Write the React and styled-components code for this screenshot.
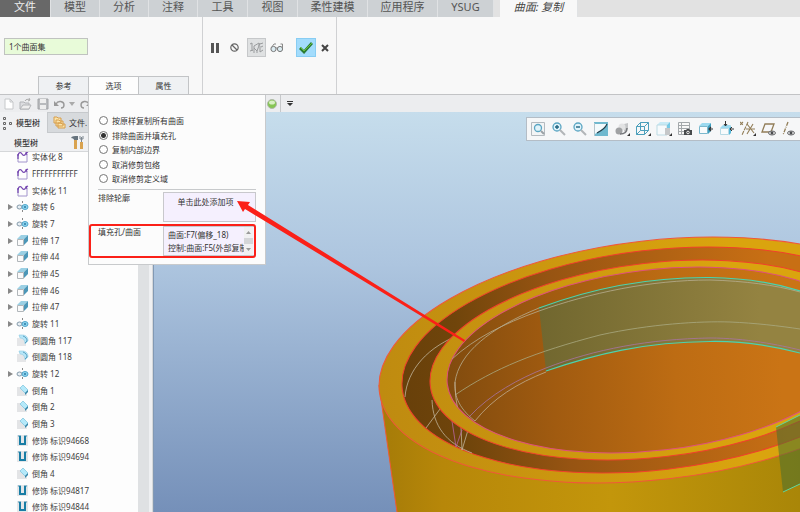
import React, { useState } from 'react'
import styled, { createGlobalStyle } from 'styled-components'

/* Global */
const GlobalStyle = createGlobalStyle`
  * {
    box-sizing: border-box;
  }
  body {
    margin: 0;
    background: #ecedef;
  }
  body, button, input {
    font-family: 'Noto Sans', 'Noto Sans CJK SC', sans-serif;
    font-size: 8px;
    color: #333;
  }
  button {
    border: 0;
    padding: 0;
    background: none;
  }
  ul {
    list-style: none;
    margin: 0;
    padding: 0;
  }
  svg {
    display: block;
    flex: none;
  }
`

/* Styled */
const StyledApp = styled.div`
  display: flex;
  flex-direction: column;
  height: 100vh;
  overflow: hidden;
`

const RibbonTabs = styled.nav`
  display: flex;
  flex: none;
  height: 17px;
  background: #e2e2e2;
`

const RibbonTab = styled.button`
  flex: none;
  width: ${(props) => props.$width}px;
  padding-bottom: 3px;
  font-size: 11px;
  line-height: 14px;
  white-space: nowrap;
  color: #555;
  background: #cdd1d4;
  border-right: 1px solid #e0e2e4;
  &.is-file {
    color: #eee;
    background: #686868;
  }
  &.is-active {
    margin-left: 6px;
    font-style: italic;
    color: #444;
    background: #f8f8f8;
  }
`

const Dashboard = styled.section`
  display: flex;
  flex: none;
  height: 78px;
  background: #f8f8f8;
  border-bottom: 1px solid #c2c3c5;
`

const SetupPane = styled.div`
  display: flex;
  flex-direction: column;
  justify-content: space-between;
  width: 203px;
  padding: 21px 0 0 4px;
  border-right: 1px solid #d0d1d3;
`

const CollectorInput = styled.input`
  width: 84px;
  height: 17px;
  padding: 0 4px;
  background: #e8fbd9;
  border: 1px solid #c0c3c0;
`

const PanelTabs = styled.div`
  display: flex;
  padding-left: 34px;
`

const PanelTabItem = styled.div`
  position: relative;
  & + & {
    margin-left: -1px;
  }
`

const PanelTab = styled.button`
  display: block;
  width: 51px;
  height: 18px;
  background: ${(props) => (props.$active ? '#fdfdfd' : '#eff1f3')};
  border: 1px solid #c2c4c6;
  border-bottom: 0;
`

const ControlPane = styled.div`
  display: flex;
  align-items: flex-start;
  width: 134px;
  padding: 21px 0 0 5px;
  border-right: 1px solid #d0d1d3;
`

const ControlButton = styled.button`
  display: flex;
  justify-content: center;
  align-items: center;
  width: ${(props) => props.$width || 20}px;
  height: 19px;
  border: 1px solid transparent;
  &.is-pressed {
    background: #dfe1e2;
    border-color: #c6c8ca;
  }
  &.is-accept {
    margin-left: 8px;
    background: #a3dcfc;
    border-color: #88cdf3;
  }
`

const QuickBar = styled.div`
  display: flex;
  flex: none;
  height: 17px;
  background: #ecedef;
`

const QuickGroup = styled.div`
  display: flex;
  align-items: center;
  flex: 1;
  &.is-left {
    flex: none;
    width: 266px;
  }
  & > .split {
    align-self: stretch;
    margin: 0 3px;
    border-left: 1px solid #c6c8ca;
  }
`

const QuickButton = styled.button`
  display: flex;
  flex: none;
  justify-content: center;
  width: ${(props) => props.$width || 17}px;
`

const Workspace = styled.main`
  display: flex;
  flex: 1;
  min-height: 0;
`

const Navigator = styled.aside`
  display: flex;
  flex: none;
  width: 154px;
  border-right: 1px solid #8299b4;
`

const NavBody = styled.div`
  display: flex;
  flex-direction: column;
  flex: 1;
  min-width: 0;
  background: #fdfdfd;
`

const ScrollTrack = styled.div`
  width: 11px;
  background: #dfe1e3;
`

const Splitter = styled.div`
  width: 4px;
  background: #eff0f2;
  border-right: 1px solid #d5d7d9;
`

const NavTabs = styled.div`
  display: flex;
  flex: none;
  height: 21px;
  background: #d7dadd;
`

const NavTab = styled.button`
  display: flex;
  align-items: center;
  gap: 3px;
  height: 21px;
  padding: 0 7px 0 1px;
  white-space: nowrap;
  background: #f0f1f3;
  font-weight: 500;
  &.is-idle {
    padding: 0 5px;
    font-weight: 400;
    background: #d7dadd;
    border: 1px solid #c6c9cc;
  }
`

const NavHeader = styled.div`
  display: flex;
  align-items: center;
  flex: none;
  gap: 32px;
  height: 19px;
  padding-left: 14px;
  font-weight: 500;
  background: #f0f1f3;
  border-bottom: 1px solid #d5d7d9;
`

const TreeViewport = styled.div`
  flex: 1;
  min-height: 0;
  overflow: hidden;
`

const TreeList = styled.ul`
  margin-top: -4px;
`

const TreeRow = styled.li`
  display: flex;
  align-items: center;
  height: 17px;
  padding-left: 7px;
  white-space: nowrap;
  color: #3c3c3c;
  &:nth-child(3n) {
    height: 16px;
  }
  .arrow {
    width: 9px;
  }
  .label {
    padding-left: 3px;
  }
`

const Viewport = styled.section`
  position: relative;
  flex: 1;
  min-width: 0;
  background: linear-gradient(#c6ddec, #adc5df 38%, #7590b9);
`

const ViewToolbar = styled.div`
  position: absolute;
  top: 5px;
  right: 0;
  display: flex;
  height: 24px;
  background: #f6f7f8;
  border: 1px solid #b4bdc6;
  border-right: 0;
`

const ViewButton = styled.button`
  display: flex;
  justify-content: center;
  align-items: center;
  width: 21px;
`

const OptionsPanel = styled.div`
  position: absolute;
  z-index: 10;
  top: 19px;
  left: 0;
  width: 178px;
  padding: 18px 9px 8px;
  background: #fcfcfc;
  border: 1px solid #c8cacc;
  border-top: 0;
`

const RadioGroup = styled.fieldset`
  margin: 0;
  padding: 0 0 3px;
  border: 0;
  border-bottom: 1px solid #c8cacc;
`

const RadioLabel = styled.label`
  display: flex;
  align-items: center;
  gap: 4px;
  height: 15px;
  &:nth-child(even) {
    height: 14px;
  }
  input {
    appearance: none;
    width: 9px;
    height: 9px;
    margin: 0 0 0 1px;
    background: #fff;
    border: 1px solid #777;
    border-radius: 50%;
  }
  input:checked {
    background: radial-gradient(#333 0 2px, #fff 3px);
  }
`

const Field = styled.div`
  display: flex;
  justify-content: space-between;
  margin-top: ${(props) => props.$gap}px;
  line-height: 12px;
`

const DropBox = styled.button`
  width: 93px;
  height: 30px;
  padding: 0 8px 12px 0;
  background: #f5f0fe;
  border: 1px solid #c8c8cc;
`

const ListBox = styled.div`
  display: flex;
  width: 93px;
  height: 30px;
  padding-right: 2px;
  background: #f5f0fe;
  border: 1px solid #c8c8cc;
  ul {
    flex: 1;
    min-width: 0;
    padding: 1px 0 0 4px;
    overflow: hidden;
    white-space: nowrap;
    line-height: 13px;
  }
`

const ListScroll = styled.div`
  display: flex;
  flex-direction: column;
  justify-content: space-between;
  width: 9px;
  background: #d4d5d8;
  button {
    display: flex;
    justify-content: center;
    align-items: center;
    height: 11px;
    background: #f0f0f2;
  }
`

const Callout = styled.div`
  position: absolute;
  left: 0;
  right: 9px;
  bottom: 6px;
  height: 34px;
  border: 2px solid #fb2018;
  border-radius: 3px;
  pointer-events: none;
`

const PointerArrow = styled.svg`
  position: absolute;
  top: 0;
  left: 0;
  pointer-events: none;
`

/* Icons */
const Icon = ({ w = 16, h = w, children }) => (
  <svg width={w} height={h} viewBox={`0 0 ${w} ${h}`} fill='none' aria-hidden='true'>
    {children}
  </svg>
)

const Caret = ({ color = '#555' }) => (
  <Icon w={6} h={4}>
    <path d='M0 0h6L3 4z' fill={color} />
  </Icon>
)

const TREE_ICONS = {
  quilt: (
    <Icon w={13}>
      <path d='M2 4v8h9V5' stroke='#a294cc' />
      <path d='M2 9V5c1-3 3-3 4-1s3 2 4-1l2-1M1 5h2M10 2l1 3' stroke='#7446b0' strokeWidth='1.200' />
    </Icon>
  ),
  revolve: (
    <Icon w={13}>
      <path d='M6.500 1v2M6.500 5v2M6.500 10v2' stroke='#888' />
      <ellipse cx='3.500' cy='7' rx='2.500' ry='2' stroke='#8298a8' fill='#e8eff4' />
      <ellipse cx='9' cy='7' rx='3' ry='2.500' stroke='#54a9cd' fill='#8fd3ee' />
      <circle cx='9' cy='7' r='1' fill='#287da5' />
    </Icon>
  ),
  extrude: (
    <Icon w={13}>
      <path d='M1 5l4-4h7L8 5z' fill='#9bd0e4' />
      <path d='M8 5l4-4v6L8 11z' fill='#4c97b8' />
      <path d='M1.500 5.500h6v6h-6z' fill='#fafafa' stroke='#b1b6ba' />
    </Icon>
  ),
  round: (
    <Icon w={13}>
      <path d='M1 4h6l3 3v5H1z' fill='#e5e6e8' />
      <path d='M3 1h3c4 0 6 2 6 6l-3 3c0-4-2-6-5-6z' fill='#b5e6f8' stroke='#8fcae0' strokeWidth='.6' />
      <path d='M7 2c3 1 4 3 4 5l-2 2' stroke='#4291b5' strokeWidth='.8' />
    </Icon>
  ),
  chamfer: (
    <Icon w={13}>
      <path d='M1 3h5l5 5v4H1z' fill='#e3e4e6' />
      <path d='M4 4l3-3 5 5-3 3z' fill='#b4e9fa' stroke='#86c8df' strokeWidth='.8' />
      <path d='M9 9l3-3v2l-3 3z' fill='#3586a9' />
    </Icon>
  ),
  cosmetic: (
    <Icon w={13}>
      <path d='M1 1h11v11H1z' fill='#e4e6e8' />
      <path d='M2 2h3M8 2h3' stroke='#4496b8' />
      <path d='M4 2v8h5V2' stroke='#187da5' strokeWidth='2' />
    </Icon>
  ),
}

const VIEW_ICONS = [
  {
    name: '重新调整',
    icon: (
      <>
        <path d='M1.500 1.500h13v13h-13z' fill='#f2f4f5' stroke='#b4babf' />
        <circle cx='8' cy='7' r='3.500' fill='#e0f3fa' stroke='#5ba6c3' strokeWidth='1.300' />
        <path d='M11 10l3 3' stroke='#9ba1a6' strokeWidth='2' />
      </>
    ),
  },
  {
    name: '放大',
    icon: (
      <>
        <circle cx='6' cy='6' r='4' fill='#e0f3fa' stroke='#5ba6c3' strokeWidth='1.300' />
        <path d='M4 6h4M6 4v4' stroke='#1f6480' strokeWidth='1.400' />
        <path d='M9 9l5 5' stroke='#b1b5b8' strokeWidth='2' />
      </>
    ),
  },
  {
    name: '缩小',
    icon: (
      <>
        <circle cx='6' cy='6' r='4' fill='#e0f3fa' stroke='#5ba6c3' strokeWidth='1.300' />
        <path d='M4 6h4' stroke='#1f6480' strokeWidth='1.400' />
        <path d='M9 9l5 5' stroke='#b1b5b8' strokeWidth='2' />
      </>
    ),
  },
  {
    name: '重画',
    icon: (
      <>
        <path d='M1 1h14v14H1z' fill='#70b9cf' />
        <path d='M2 3h12C12 8 7 9 2 13z' fill='#f3fafc' />
        <path d='M14 3C12 8 8 10 4 12' stroke='#263f4a' strokeWidth='1.200' />
        <path d='M1.500 2v13' stroke='#b4c5cc' />
      </>
    ),
  },
  {
    name: '渲染选项',
    icon: (
      <>
        <path d='M10 3l4-1v6l-4 3z' fill='#c4c6c8' />
        <circle cx='8' cy='6' r='3.500' fill='#e2e3e4' />
        <circle cx='5' cy='10' r='3.500' fill='#a0a2a4' />
        <path d='M6 13c4 0 7-2 7-6' stroke='#76787b' strokeWidth='1.500' />
        <path d='M16 12v3h-3z' fill='#333' />
      </>
    ),
  },
  {
    name: '显示样式',
    icon: (
      <>
        <path
          d='M1.500 5.500h8v8h-8zM5.500 1.500h8v8h-8zM1.500 5.500l4-4M9.500 5.500l4-4M9.500 13.500l4-4M1.500 13.500l4-4'
          stroke='#4b9fbb'
        />
        <path d='M16 12v3h-3z' fill='#333' />
      </>
    ),
  },
  {
    name: '视图管理器',
    icon: (
      <>
        <path d='M1 4l3-3h10l-3 3z' fill='#c7eaf6' />
        <path d='M1 4h10v10H1z' fill='#f6fafc' stroke='#bcdae3' />
        <path d='M11 4l3-3v6l-3 2z' fill='#76c9e5' />
        <path d='M9 7h5v7H9z' fill='#c5c7c9' />
        <path d='M16 12v3h-3z' fill='#333' />
      </>
    ),
  },
  {
    name: '保存的方向',
    icon: (
      <>
        <path d='M1.500 1.500h11v12h-11zM1.500 4.500h11M1.500 7.500h11M1.500 10.500h11M4.500 1.500v12' stroke='#a3a8ab' fill='#f8f8f8' />
        <path d='M7 9h2l1-1h2l1 1h2v5H7z' fill='#484b4d' />
        <circle cx='11' cy='11.500' r='1.300' stroke='#eee' />
      </>
    ),
  },
  {
    name: '透视图',
    icon: (
      <>
        <path d='M1 5l3-3h9l-3 3z' fill='#9cdaf0' />
        <path d='M1.500 5.500h8v7h-8z' fill='#f8fbfc' stroke='#7bb8cd' />
        <path d='M10 5l3-3v8l-3 3z' fill='#3f9fc0' />
        <path d='M15 8h-4M13 6l-2 2 2 2' stroke='#333' strokeWidth='1.200' />
      </>
    ),
  },
  {
    name: '剖面',
    icon: (
      <>
        <path d='M1 7l3-3h8l-2 3z' fill='#9cdaf0' />
        <path d='M1.500 7.500h8v6h-8z' fill='#f8fbfc' stroke='#b8dae5' />
        <path d='M10 7l2-2v7l-2 2z' fill='#54b8da' />
        <path d='M15 8h-4M13 6l-2 2 2 2M6.500 0v5M5 3l1.500 2L8 3' stroke='#333' />
      </>
    ),
  },
  {
    name: '基准显示',
    icon: (
      <>
        <path d='M0 1l3 3M3 1L0 4M8 1L2 14' stroke='#927e58' strokeDasharray='4 1' strokeWidth='1.100' />
        <path d='M7 3l7 9M13 3L7 13M6 8h9' stroke='#927e58' strokeWidth='1.100' />
        <path d='M16 12v3h-3z' fill='#333' />
      </>
    ),
  },
  {
    name: '平面显示',
    icon: (
      <>
        <path d='M4 3h9l-3 8H1z' stroke='#927e58' strokeWidth='1.300' />
        <ellipse cx='11' cy='12' rx='3.500' ry='2' fill='#ddd' stroke='#66686b' />
        <circle cx='11' cy='12' r='1.400' fill='#4b4d50' />
      </>
    ),
  },
  {
    name: '轴显示',
    icon: (
      <>
        <path d='M6 1L1 14' stroke='#927e58' strokeWidth='1.300' strokeDasharray='4 1 1 1' />
        <ellipse cx='9' cy='12' rx='3.500' ry='2' fill='#ddd' stroke='#66686b' />
        <circle cx='9' cy='12' r='1.400' fill='#4b4d50' />
      </>
    ),
  },
]

const RIBBON = [
  { label: '文件', width: 51, state: 'is-file' },
  { label: '模型', width: 49 },
  { label: '分析', width: 49 },
  { label: '注释', width: 49 },
  { label: '工具', width: 50 },
  { label: '视图', width: 50 },
  { label: '柔性建模', width: 70 },
  { label: '应用程序', width: 70 },
  { label: 'YSUG', width: 56 },
  { label: '曲面: 复制', width: 78, state: 'is-active' },
]

const TREE = [
  ['quilt', '实体化 8'],
  ['quilt', 'FFFFFFFFFFF'],
  ['quilt', '实体化 11'],
  ['revolve', '旋转 6'],
  ['revolve', '旋转 7'],
  ['extrude', '拉伸 17'],
  ['extrude', '拉伸 44'],
  ['extrude', '拉伸 45'],
  ['extrude', '拉伸 46'],
  ['extrude', '拉伸 47'],
  ['revolve', '旋转 11'],
  ['round', '倒圆角 117'],
  ['round', '倒圆角 118'],
  ['revolve', '旋转 12'],
  ['chamfer', '倒角 1'],
  ['chamfer', '倒角 2'],
  ['chamfer', '倒角 3'],
  ['cosmetic', '修饰 标识94668'],
  ['cosmetic', '修饰 标识94694'],
  ['chamfer', '倒角 4'],
  ['cosmetic', '修饰 标识94817'],
  ['cosmetic', '修饰 标识94844'],
]

const COPY_MODES = ['按原样复制所有曲面', '排除曲面并填充孔', '复制内部边界', '取消修剪包络', '取消修剪定义域']

/* Shaded model, all rings share one centre and one tilt */
const Ring = ({ rx, ry, ...rest }) => (
  <ellipse cx='655' cy='360' rx={rx} ry={ry} transform='rotate(-6.58 655 360)' {...rest} />
)

const Model = () => (
  <svg width='100%' height='100%' viewBox='154 112 646 400' preserveAspectRatio='xMidYMid slice' role='img' aria-label='模型'>
    <defs>
      <linearGradient id='body' gradientUnits='userSpaceOnUse' x1='380' x2='800' y1='0' y2='0'>
        <stop offset='0' stopColor='#a57b08' />
        <stop offset='.15' stopColor='#b78709' />
        <stop offset='.55' stopColor='#c3960b' />
        <stop offset='1' stopColor='#a98608' />
      </linearGradient>
      <linearGradient id='top' gradientUnits='userSpaceOnUse' x1='380' x2='740' y1='0' y2='0'>
        <stop offset='0' stopColor='#bf8b10' />
        <stop offset='1' stopColor='#daa40e' />
      </linearGradient>
      <linearGradient id='groove' gradientUnits='userSpaceOnUse' x1='400' x2='780' y1='0' y2='0'>
        <stop offset='0' stopColor='#68400a' />
        <stop offset='.16' stopColor='#70450b' />
        <stop offset='.42' stopColor='#975412' />
        <stop offset='1' stopColor='#c86f14' />
      </linearGradient>
      <linearGradient id='bore' gradientUnits='userSpaceOnUse' x1='450' x2='800' y1='0' y2='20'>
        <stop offset='0' stopColor='#7c490e' />
        <stop offset='.35' stopColor='#a15b10' />
        <stop offset='.7' stopColor='#bd6c13' />
        <stop offset='1' stopColor='#ca7415' />
      </linearGradient>
      <linearGradient id='patch' gradientUnits='userSpaceOnUse' x1='540' x2='760' y1='0' y2='0'>
        <stop offset='0' stopColor='#71672f' />
        <stop offset='1' stopColor='#948341' />
      </linearGradient>
      <clipPath id='boreClip'>
        <Ring rx='209' ry='90.4' />
      </clipPath>
    </defs>
    <path d='M379 385L398 520H940V335z' fill='url(#body)' />
    <path d='M379 385L397 512' stroke='#ee5a34' />
    <Ring rx='277.5' ry='119.6' fill='url(#top)' stroke='#f0583a' />
    <Ring rx='254.4' ry='109.9' fill='url(#groove)' stroke='#f0402c' />
    <g stroke='#c0b49b' strokeWidth='.8' fill='none'>
      <path d='M405 397C407 370 428 346 462 334M426 428L440 409M432 400C433 426 446 443 472 453M461 427L462 450L468 430' />
      <path d='M452 421L456 447L462 430' stroke='#b865a0' />
    </g>
    <Ring rx='226.2' ry='97.2' fill='url(#top)' stroke='#f0402c' />
    <Ring rx='209.1' ry='90.4' fill='url(#bore)' stroke='#e0507c' />
    <g clipPath='url(#boreClip)' fill='none' strokeWidth='.8'>
      <path d='M539 308C590 289 650 277 710 277.500C745 278 775 283 800 291V353C770 345 740 341 710 341.500C645 342 595 354 546 371z' fill='url(#patch)' />
      <path d='M475 421C457 407 454 393 455 382C459 353 490 328 539 308M452 359C475 338 503 324 539 311C590 293 650 280 710 280C745 281 775 285 800 292' stroke='#b8ad91' />
      <path d='M455 395C495 368 535 352 600 335C650 324 700 321 730 322C755 323 780 326 800 329' stroke='#a9aa82' />
      <path d='M475 421C493 398 518 383 546 372M455 382Q455 398 458 411' stroke='#c0ad91' />
      <path d='M469 417C490 394 520 378 546 368C595 349 650 339 710 338C745 338 780 345 800 350' stroke='#a873a4' />
      <path d='M539 308C590 289 650 277 710 277.500C745 278 775 283 800 291M546 371C595 354 645 342 710 341.500C740 341 770 345 800 353' stroke='#4bd3ae' strokeWidth='1.200' />
    </g>
    <path d='M776 427L800 415V484L783 492z' fill='#48702f' fillOpacity='.55' />
    <path d='M776 427L800 415M783 492L800 484' stroke='#5fd8a0' />
  </svg>
)

const CopyOptions = () => {
  const [mode, setMode] = useState(1)
  return (
    <OptionsPanel>
      <RadioGroup aria-label='选项'>
        {COPY_MODES.map((label, index) => (
          <RadioLabel key={label}>
            <input type='radio' name='copy-mode' checked={mode === index} onChange={() => setMode(index)} />
            {label}
          </RadioLabel>
        ))}
      </RadioGroup>
      <Field $gap={2}>
        <span>排除轮廓</span>
        <DropBox>单击此处添加项</DropBox>
      </Field>
      <Field $gap={4}>
        <span>填充孔/曲面</span>
        <ListBox>
          <ul>
            <li>曲面:F7(偏移_18)</li>
            <li>控制:曲面:F5(外部复制</li>
          </ul>
          <ListScroll>
            <button aria-label='向上'>
              <Icon w={5} h={3}>
                <path d='M0 3h5L2.500 0z' fill='#999' />
              </Icon>
            </button>
            <button aria-label='向下'>
              <Icon w={5} h={3}>
                <path d='M0 0h5L2.500 3z' fill='#999' />
              </Icon>
            </button>
          </ListScroll>
        </ListBox>
      </Field>
      <Callout />
      <PointerArrow width='380' height='250' viewBox='89 95 380 250'>
        <path d='M237 201L250 202L248 205L465 340L464 342L245 209L243 212z' fill='#fb2018' />
      </PointerArrow>
    </OptionsPanel>
  )
}

const App = () => (
  <StyledApp>
    <GlobalStyle />
    <RibbonTabs>
      {RIBBON.map((tab) => (
        <RibbonTab key={tab.label} className={tab.state} $width={tab.width}>
          {tab.label}
        </RibbonTab>
      ))}
    </RibbonTabs>

    <Dashboard>
      <SetupPane>
        <CollectorInput aria-label='曲面集' defaultValue='1个曲面集' />
        <PanelTabs>
          <PanelTabItem>
            <PanelTab>参考</PanelTab>
          </PanelTabItem>
          <PanelTabItem>
            <PanelTab $active>选项</PanelTab>
            <CopyOptions />
          </PanelTabItem>
          <PanelTabItem>
            <PanelTab>属性</PanelTab>
          </PanelTabItem>
        </PanelTabs>
      </SetupPane>
      <ControlPane>
        <ControlButton aria-label='暂停' $width={14}>
          <Icon w={8} h={10}>
            <path d='M0 0h3v10H0zM5 0h3v10H5z' fill='#555' />
          </Icon>
        </ControlButton>
        <ControlButton aria-label='无预览' $width={25}>
          <Icon w={9}>
            <circle cx='4.500' cy='4.500' r='3.700' stroke='#666' strokeWidth='1.200' />
            <path d='M2 2l5 5' stroke='#666' strokeWidth='1.200' />
          </Icon>
        </ControlButton>
        <ControlButton aria-label='分离' className='is-pressed' $width={19}>
          <Icon w={15} h={13}>
            <path d='M1 3l2-1v8M1 10l3-1M5 12V5l5-3v3M5 7l3 3 3-8M8 10v2M11 5v6l3-2M11 3l3-1M12 6l2-1' stroke='#999b9d' />
          </Icon>
        </ControlButton>
        <ControlButton aria-label='预览' $width={22}>
          <Icon w={14} h={11}>
            <circle cx='3.500' cy='7' r='2.600' fill='#dcecf2' stroke='#777' />
            <circle cx='10' cy='7' r='2.600' fill='#dcecf2' stroke='#777' />
            <path d='M6 6h2M1 6l3-4h2M12.500 6V2h-2' stroke='#888' />
          </Icon>
        </ControlButton>
        <ControlButton aria-label='确定' className='is-accept'>
          <Icon w={14} h={12}>
            <path d='M1 6l4 4 8-9' stroke='#2c7b35' strokeWidth='2.800' />
            <path d='M1 5l4 4 8-8' stroke='#6ac43b' />
          </Icon>
        </ControlButton>
        <ControlButton aria-label='取消' $width={17}>
          <Icon w={8}>
            <path d='M1 1l6 6M7 1L1 7' stroke='#444' strokeWidth='2' />
          </Icon>
        </ControlButton>
      </ControlPane>
    </Dashboard>

    <QuickBar>
      <QuickGroup className='is-left'>
        <QuickButton aria-label='新建'>
          <Icon w={10} h={12}>
            <path d='M1 1h5l3 3v7H1zM6 1v3h3' fill='#fff' stroke='#c6c8ca' />
          </Icon>
        </QuickButton>
        <QuickButton aria-label='打开'>
          <Icon w={13} h={12}>
            <path d='M1 11V4h4l1 1h4v6z' fill='#dcdde0' stroke='#b2b4b7' />
            <path d='M1 11l3-4h8l-2 4z' fill='#eee' stroke='#b2b4b7' />
            <path d='M6 3c1-2 3-2 5-1M10 0l1 2-2 1' stroke='#aaa' />
          </Icon>
        </QuickButton>
        <QuickButton aria-label='保存'>
          <Icon w={12}>
            <path d='M1 1h10v10H1z' fill='#b8babd' stroke='#a2a4a7' />
            <path d='M3 1h6v4H3zM3 7h6v4H3z' fill='#eee' />
          </Icon>
        </QuickButton>
        <QuickButton aria-label='撤消' $width={16}>
          <Icon w={12} h={10}>
            <path d='M3 5c2-4 8-3 8 1 0 2-1 3-3 3' stroke='#999' strokeWidth='1.400' />
            <path d='M1 2v5h5z' fill='#999' />
          </Icon>
        </QuickButton>
        <QuickButton aria-label='撤消列表' $width={10}>
          <Caret color='#aaa' />
        </QuickButton>
        <QuickButton aria-label='重做'>
          <Icon w={12} h={10}>
            <path d='M9 5C7 1 1 2 1 6c0 2 1 3 3 3' stroke='#999' strokeWidth='1.400' />
            <path d='M11 2v5H6z' fill='#999' />
          </Icon>
        </QuickButton>
      </QuickGroup>
      <QuickGroup>
        <QuickButton aria-label='外观' $width={11}>
          <Icon w={10}>
            <circle cx='5' cy='5' r='4.500' fill='#85c553' stroke='#b1b9ab' />
            <ellipse cx='5' cy='3.500' rx='3' ry='2' fill='#d7f0c3' />
          </Icon>
        </QuickButton>
        <span className='split' />
        <QuickButton aria-label='自定义' $width={11}>
          <Icon w={6}>
            <path d='M0 0h6v1H0zM0 2h6L3 5z' fill='#333' />
          </Icon>
        </QuickButton>
      </QuickGroup>
    </QuickBar>

    <Workspace>
      <Navigator>
        <NavBody>
          <NavTabs>
            <NavTab>
              <Icon w={12} h={14}>
                <path d='M2.500 1.500h2v2h-2zM2.500 6.500h2v2h-2zM2.500 11.500h2v2h-2zM8.500 6.500h2v2h-2z' stroke='#666' />
              </Icon>
              模型树
            </NavTab>
            <NavTab className='is-idle'>
              <Icon w={13}>
                <path d='M1 1h3l1 1h3v5H1zM3 4h3l1 1h3v5H3zM5 7h3l1 1h3v4H5z' fill='#fbe3a8' stroke='#d79e4c' />
              </Icon>
              文件.
            </NavTab>
          </NavTabs>
          <NavHeader>
            模型树
            <Icon w={14} h={15}>
              <path d='M4 5h3v9H4zM10 7h3v7h-3z' fill='#d9a350' />
              <path d='M1 3c1-2 3-2 7-2v4H4c0-1-1-2-3-2z' fill='#66737d' />
              <path d='M11.500 2v5M10 1v3h3V1' stroke='#7c8790' />
            </Icon>
          </NavHeader>
          <TreeViewport>
            <TreeList>
              {TREE.map(([type, label]) => (
                <TreeRow key={label}>
                  <span className='arrow'>
                    {(type === 'revolve' || type === 'extrude') && (
                      <Icon w={6} h={7}>
                        <path d='M1 1l5 3-5 3z' fill='#888' />
                      </Icon>
                    )}
                  </span>
                  {TREE_ICONS[type]}
                  <span className='label'>{label}</span>
                </TreeRow>
              ))}
            </TreeList>
          </TreeViewport>
        </NavBody>
        <ScrollTrack />
        <Splitter />
      </Navigator>
      <Viewport>
        <Model />
        <ViewToolbar>
          {VIEW_ICONS.map(({ name, icon }) => (
            <ViewButton key={name} aria-label={name}>
              <Icon>{icon}</Icon>
            </ViewButton>
          ))}
        </ViewToolbar>
      </Viewport>
    </Workspace>
  </StyledApp>
)

export default App
